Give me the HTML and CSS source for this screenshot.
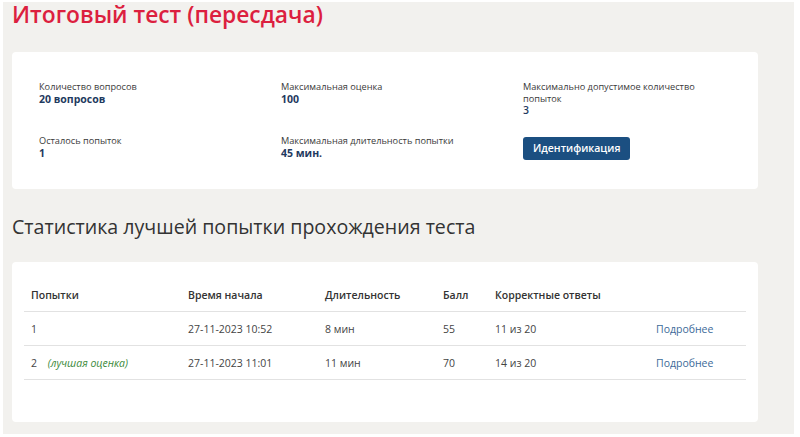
FILE: index.html
```html
<!DOCTYPE html>
<html lang="ru">
<head>
<meta charset="utf-8">
<title>Итоговый тест (пересдача)</title>
<link rel="stylesheet" href="styles.css">
</head>
<body>
<div class="page">
  <h1 class="title">Итоговый тест (пересдача)</h1>

  <section class="card info">
    <div class="info-grid">
      <div class="field">
        <div class="label">Количество вопросов</div>
        <div class="value">20 вопросов</div>
      </div>
      <div class="field">
        <div class="label">Максимальная оценка</div>
        <div class="value">100</div>
      </div>
      <div class="field">
        <div class="label narrow">Максимально допустимое количество попыток</div>
        <div class="value plain">3</div>
      </div>
      <div class="field">
        <div class="label">Осталось попыток</div>
        <div class="value">1</div>
      </div>
      <div class="field">
        <div class="label">Максимальная длительность попытки</div>
        <div class="value">45 мин.</div>
      </div>
      <div class="field">
        <button class="btn" type="button">Идентификация</button>
      </div>
    </div>
  </section>

  <h2 class="section-title">Статистика лучшей попытки прохождения теста</h2>

  <section class="card stats">
    <table class="attempts">
      <thead>
        <tr>
          <th class="c1">Попытки</th>
          <th class="c2">Время начала</th>
          <th class="c3">Длительность</th>
          <th class="c4">Балл</th>
          <th class="c5">Корректные ответы</th>
          <th class="c6"></th>
        </tr>
      </thead>
      <tbody>
        <tr>
          <td>1</td>
          <td>27-11-2023 10:52</td>
          <td>8 мин</td>
          <td>55</td>
          <td>11 из 20</td>
          <td><a class="more" href="#">Подробнее</a></td>
        </tr>
        <tr>
          <td>2 <span class="best">(лучшая оценка)</span></td>
          <td>27-11-2023 11:01</td>
          <td>11 мин</td>
          <td>70</td>
          <td>14 из 20</td>
          <td><a class="more" href="#">Подробнее</a></td>
        </tr>
      </tbody>
    </table>
  </section>
</div>
</body>
</html>
```
FILE: styles.css
```css
html {
  background: #ffffff;
}
body {
  margin: 0;
  font-family: "Open Sans", "Noto Sans", sans-serif;
  color: #333333;
}
.page {
  margin: 2px 6px 3px 3px;
  height: 432px;
  background: #f2f1ee;
  padding: 0 0 0 9px;
  box-sizing: border-box;
}
.title {
  margin: 0;
  font-size: 22.8px;
  line-height: 26px;
  font-weight: 600;
  color: #dc1f3f;
}
.card {
  width: 746px;
  box-sizing: border-box;
  background: #ffffff;
  border-radius: 4px;
}
.info {
  margin-top: 24px;
  height: 137px;
  padding: 29px 0 0 27px;
}
.info-grid {
  display: grid;
  grid-template-columns: 242px 242px 200px;
  row-gap: 19px;
}
.label {
  font-size: 9.2px;
  line-height: 11.5px;
  color: #3a3a3a;
}
.label.narrow {
  max-width: 180px;
}
.value {
  font-size: 10.5px;
  line-height: 12px;
  font-weight: 700;
  color: #1f3a60;
}
.value.plain {
  font-weight: 600;
}
.btn {
  margin-top: -2px;
  height: 23px;
  padding: 0 10px;
  border: none;
  border-radius: 3px;
  background: #1b4f81;
  color: #ffffff;
  font-family: inherit;
  font-size: 10.5px;
  font-weight: 600;
}
.section-title {
  margin: 0;
  padding: 25px 0 22px;
  font-size: 19.6px;
  line-height: 26px;
  font-weight: 400;
  color: #333333;
}
.stats {
  height: 160px;
  padding: 16px 12px 0;
}
.attempts {
  width: 722px;
  border-collapse: collapse;
  table-layout: fixed;
  font-size: 10.5px;
}
.attempts th {
  text-align: left;
  font-weight: 600;
  color: #333333;
  height: 33px;
  padding: 0 7px;
  border-bottom: 1px solid #e2e2e2;
}
.attempts td {
  height: 33px;
  padding: 0 7px;
  color: #444444;
  border-bottom: 1px solid #e2e2e2;
  white-space: nowrap;
}
.c1 { width: 143px; }
.c2 { width: 123px; }
.c3 { width: 104px; }
.c4 { width: 38px; }
.c5 { width: 147px; }
.c6 { width: 83px; }
.best {
  margin-left: 8px;
  font-style: italic;
  color: #3b8a3b;
}
.more {
  color: #3d6a99;
  text-decoration: none;
}
```
